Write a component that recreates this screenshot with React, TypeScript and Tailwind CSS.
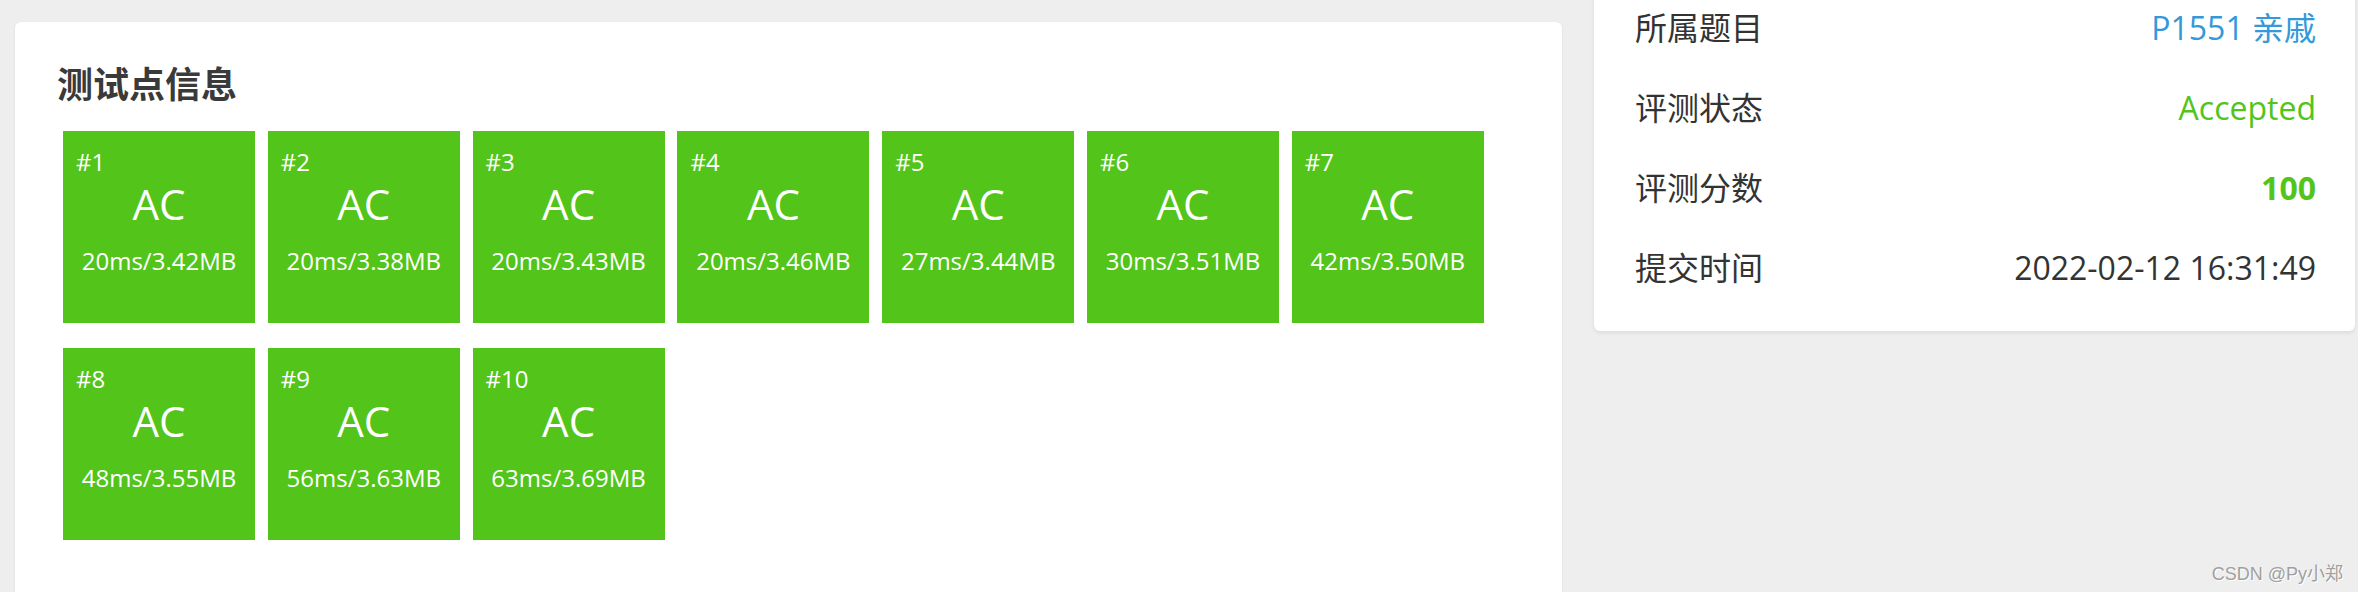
import React from "react"

const cases = [
  { id: 1, stat: "20ms/3.42MB" },
  { id: 2, stat: "20ms/3.38MB" },
  { id: 3, stat: "20ms/3.43MB" },
  { id: 4, stat: "20ms/3.46MB" },
  { id: 5, stat: "27ms/3.44MB" },
  { id: 6, stat: "30ms/3.51MB" },
  { id: 7, stat: "42ms/3.50MB" },
  { id: 8, stat: "48ms/3.55MB" },
  { id: 9, stat: "56ms/3.63MB" },
  { id: 10, stat: "63ms/3.69MB" },
]

const FONT = "font-['Open_Sans','Noto_Sans_CJK_SC',sans-serif]"

function CaseTile({ id, stat }: { id: number; stat: string }) {
  return (
    <div className="w-[192px] h-[192px] bg-[#52c41a] text-white flex flex-col pt-[19px] px-[13px]">
      <div className="text-[24px] leading-[24px]">#{id}</div>
      <div className="mt-[9px] text-[42px] leading-[42px] text-center">AC</div>
      <div className="mt-[24px] text-[24px] leading-[24px] text-center whitespace-nowrap">{stat}</div>
    </div>
  )
}

function InfoRow({ label, children }: { label: string; children: React.ReactNode }) {
  return (
    <div className="h-[80px] flex items-center justify-between">
      <span className="text-[#333]">{label}</span>
      {children}
    </div>
  )
}

export default function App() {
  return (
    <div className={`relative h-[592px] w-[2358px] overflow-hidden bg-[#eeeeee] ${FONT}`}>
      <div className="flex items-start pl-[15px] pr-[3px] gap-[32px]">
        {/* 测试点 */}
        <div className="mt-[22px] flex-1 bg-white rounded-[6px] shadow-[0_1px_3px_rgba(0,0,0,0.08)] pl-[42px] pt-[45px] pb-[80px]">
          <h3 className="text-[36px] leading-[36px] font-bold text-[#3a3a3a]">测试点信息</h3>
          <div className="mt-[28px] ml-[6px] flex flex-wrap gap-x-[12.8px] gap-y-[25px]">
            {cases.map((c) => (
              <CaseTile key={c.id} {...c} />
            ))}
          </div>
        </div>

        {/* 评测信息 */}
        <div className="mt-[-36px] w-[761px] shrink-0 bg-white rounded-[6px] shadow-[0_2px_4px_rgba(0,0,0,0.08)] pt-[24px] pb-[23px] pl-[41px] pr-[39px] text-[32px]">
          <InfoRow label="所属题目">
            <span className="text-[#3498db]">P1551 亲戚</span>
          </InfoRow>
          <InfoRow label="评测状态">
            <span className="text-[#52c41a]">Accepted</span>
          </InfoRow>
          <InfoRow label="评测分数">
            <span className="text-[#52c41a] font-bold">100</span>
          </InfoRow>
          <InfoRow label="提交时间">
            <span className="text-[#333]">2022-02-12 16:31:49</span>
          </InfoRow>
        </div>
      </div>

      <div className="absolute right-[15px] bottom-[9px] text-[18px] leading-[18px] text-[#a0a0a0] font-['Liberation_Sans','Noto_Sans_CJK_SC',sans-serif] [text-shadow:1px_1px_0_#ffffff]">
        CSDN @Py小郑
      </div>
    </div>
  )
}
